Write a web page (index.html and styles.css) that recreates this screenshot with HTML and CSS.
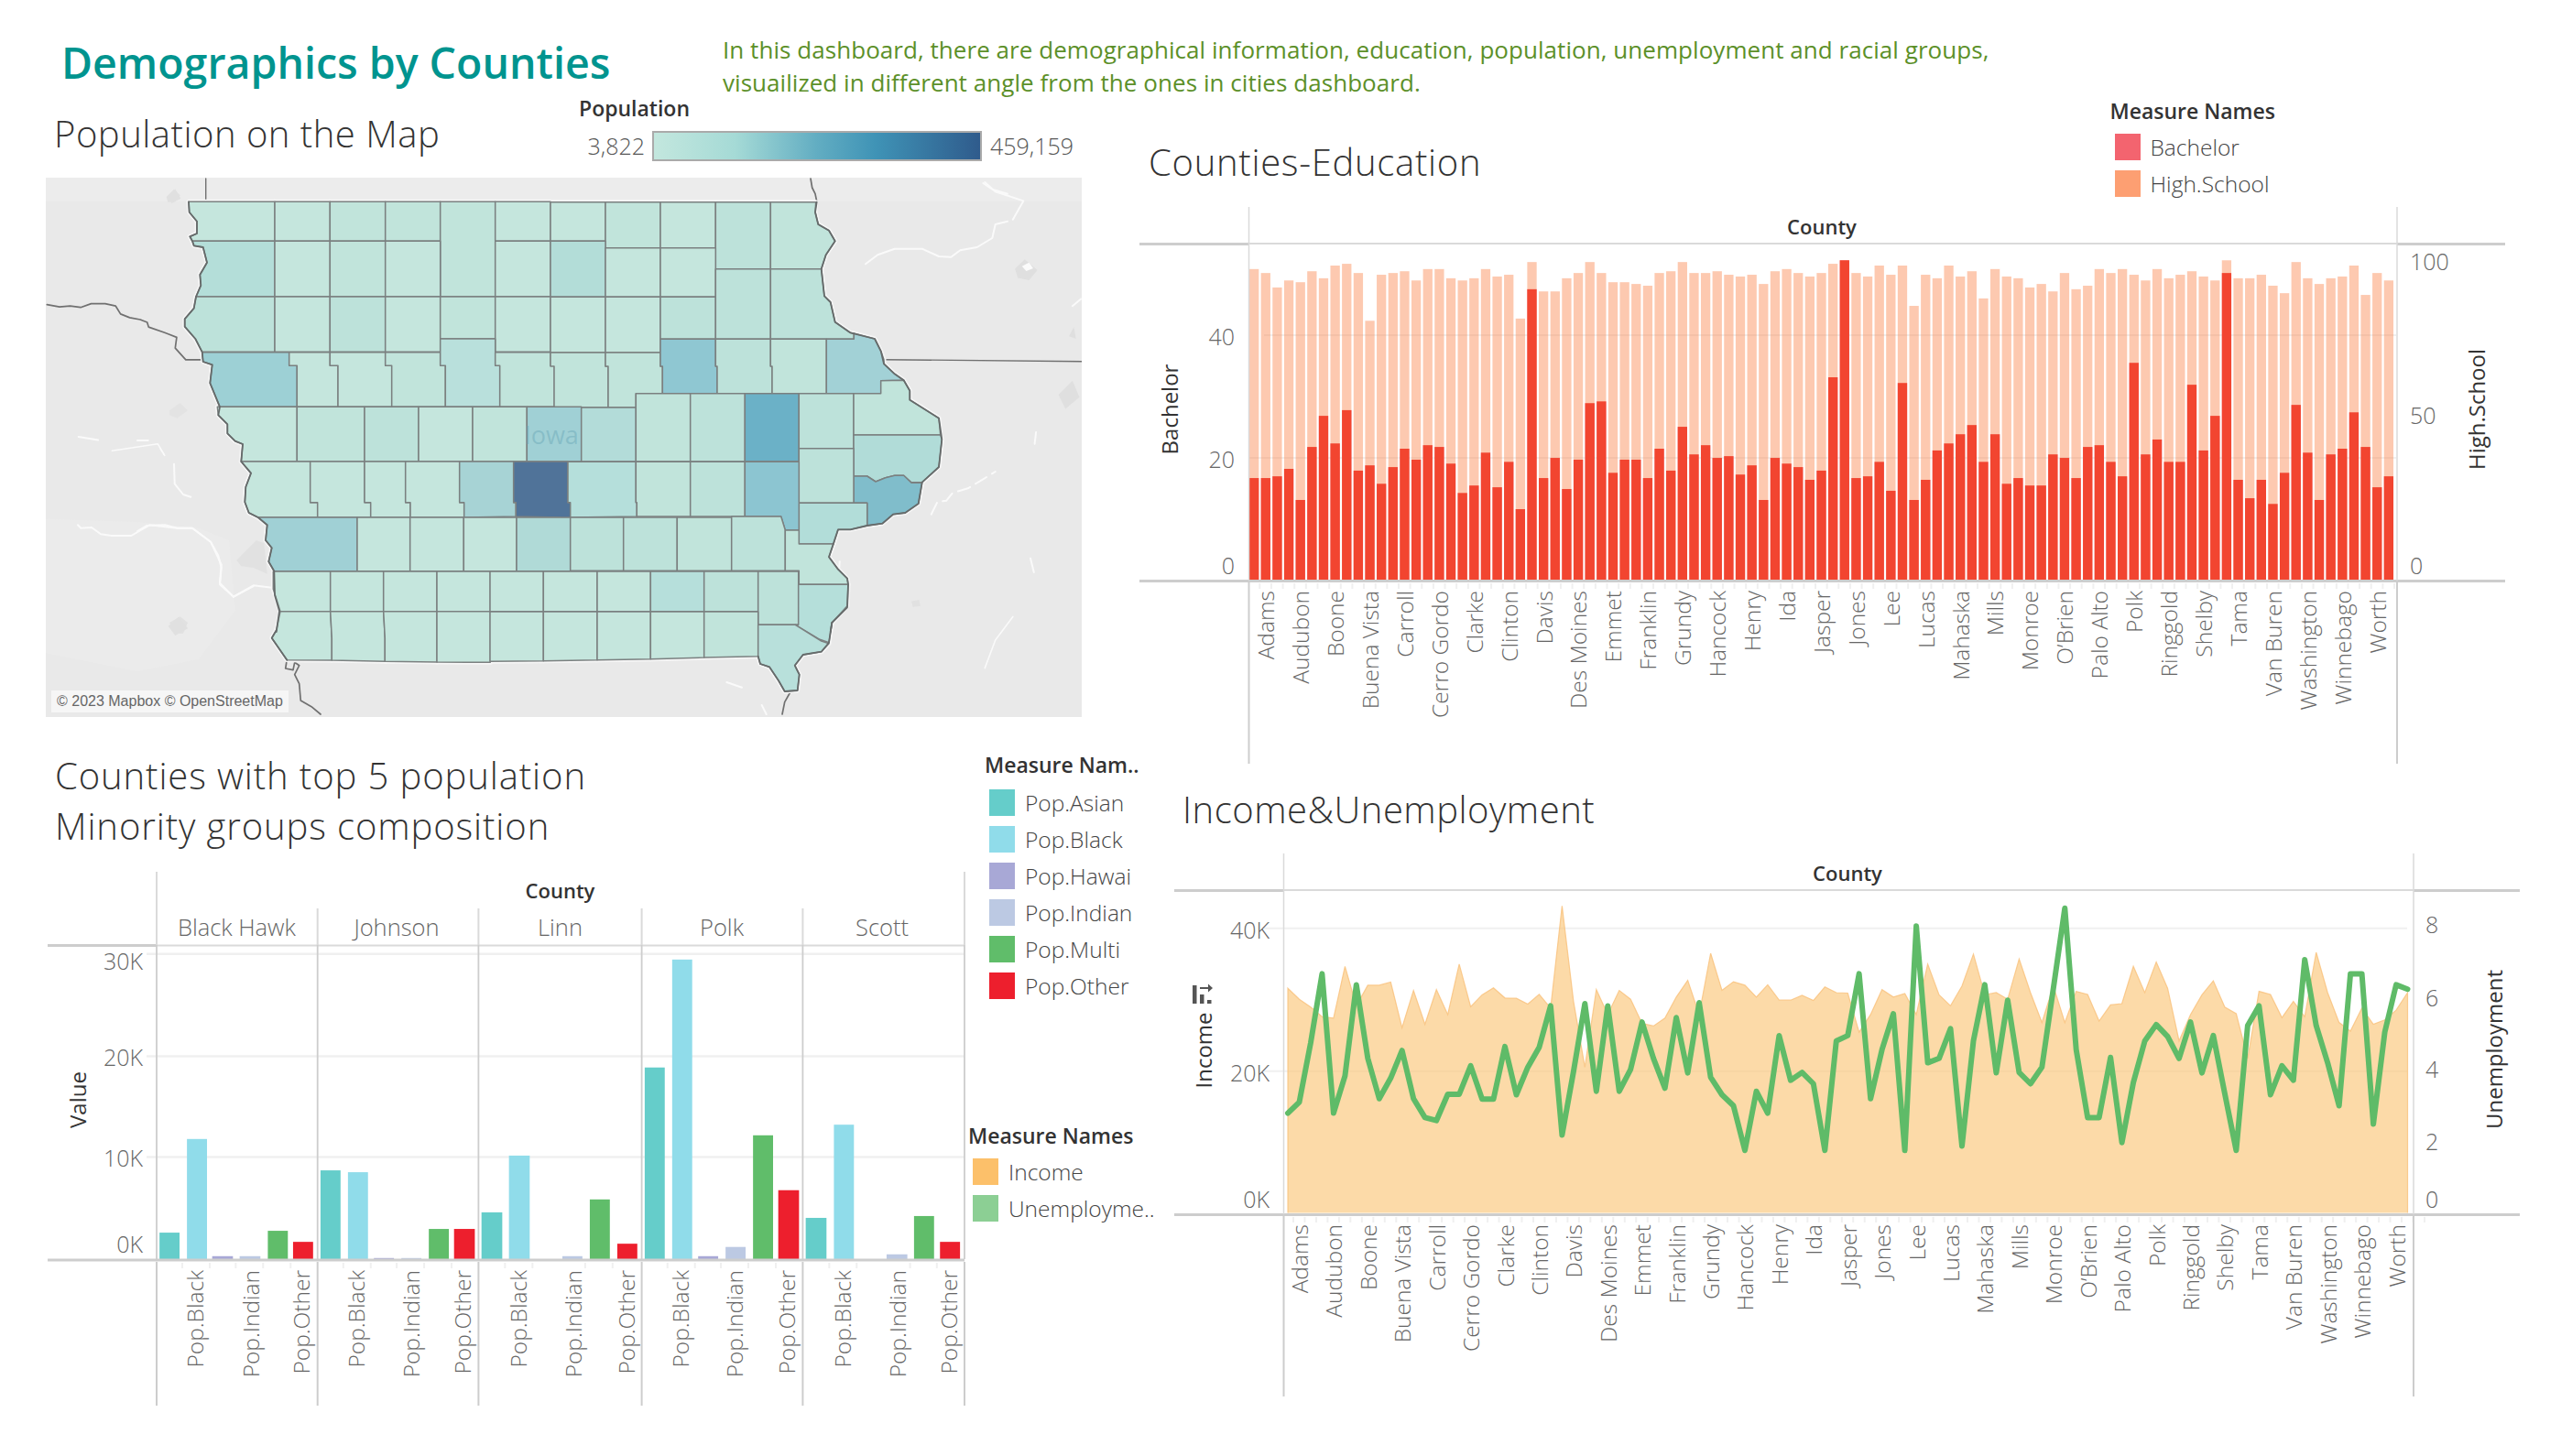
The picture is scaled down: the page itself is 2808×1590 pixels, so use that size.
FILE: index.html
```html
<!DOCTYPE html>
<html lang="en">
<head>
<meta charset="utf-8">
<title>Demographics by Counties</title>
<link rel="stylesheet" href="styles.css">
</head>
<body>
<main class="dash">
  <header class="top">
    <h1 class="main-title">Demographics by Counties</h1>
    <p class="intro">In this dashboard, there are demographical information, education, population, unemployment and racial groups,<br>visuailized in different angle from the ones in cities dashboard.</p>
  </header>
  <div class="cols">
    <section class="col-left">
      <div class="map-head">
        <h2 class="sheet-title">Population on the Map</h2>
        <div class="pop-legend">
          <div class="legend-title">Population</div>
          <div class="pop-row">
            <span class="pop-min">3,822</span>
            <span class="pop-ramp"></span>
            <span class="pop-max">459,159</span>
          </div>
        </div>
      </div>
      <div class="map">
        <svg id="map" class="map-svg" viewBox="50 194 1131 589" width="1131" height="589"></svg>
        <div class="attribution">© 2023 Mapbox © OpenStreetMap</div>
      </div>
      <div class="minority">
        <div class="minority-main">
          <h2 class="sheet-title two-line">Counties with top 5 population<br>Minority groups composition</h2>
          <svg id="minority" class="chart minority-chart" viewBox="40 940 1030 600" width="1030" height="600"></svg>
        </div>
        <div class="minority-legends">
          <div class="legend legend-races">
            <div class="legend-title">Measure Nam..</div>
            <div class="legend-item"><i class="swatch c-asian"></i>Pop.Asian</div>
            <div class="legend-item"><i class="swatch c-black"></i>Pop.Black</div>
            <div class="legend-item"><i class="swatch c-hawai"></i>Pop.Hawai</div>
            <div class="legend-item"><i class="swatch c-indian"></i>Pop.Indian</div>
            <div class="legend-item"><i class="swatch c-multi"></i>Pop.Multi</div>
            <div class="legend-item"><i class="swatch c-other"></i>Pop.Other</div>
          </div>
          <div class="legend legend-income">
            <div class="legend-title">Measure Names</div>
            <div class="legend-item"><i class="swatch c-income"></i>Income</div>
            <div class="legend-item"><i class="swatch c-unemp"></i>Unemployme..</div>
          </div>
        </div>
      </div>
    </section>
    <section class="col-right">
      <div class="edu-head">
        <h2 class="sheet-title edu-title">Counties-Education</h2>
        <div class="legend legend-edu">
          <div class="legend-title">Measure Names</div>
          <div class="legend-item"><i class="swatch c-bachelor"></i>Bachelor</div>
          <div class="legend-item"><i class="swatch c-high"></i>High.School</div>
        </div>
      </div>
      <svg id="education" class="chart" viewBox="1240 220 1520 620" width="1520" height="620"></svg>
      <div class="inc-head">
        <h2 class="sheet-title">Income&amp;Unemployment</h2>
      </div>
      <svg id="income" class="chart income-chart" viewBox="1270 925 1490 620" width="1490" height="620"></svg>
    </section>
  </div>
</main>
<script src="charts.js"></script>
</body>
</html>
```

FILE: styles.css
```css
* { box-sizing: border-box; }
html, body { margin: 0; padding: 0; background: #fff; }
body { font-family: "Open Sans", "Noto Sans", sans-serif; color: #333; }
.dash { width: 2808px; height: 1590px; overflow: hidden; }

.top { height: 104px; display: flex; padding-left: 67px; }
.main-title { margin: 39px 0 0; font-size: 46.5px; line-height: 58px; font-weight: 600; color: #00948f; white-space: nowrap; width: 722px; }
.intro { margin: 36px 0 0; font-size: 26px; line-height: 36px; letter-spacing: .05px; color: #5c9029; white-space: nowrap; }

.cols { display: flex; }
.col-left { width: 1240px; flex: none; }
.col-right { width: 1568px; flex: none; }

.sheet-title { margin: 0; font-size: 40px; line-height: 54px; font-weight: 300; letter-spacing: .5px; color: #333; white-space: nowrap; }

.map-head { height: 90px; display: flex; padding-left: 59px; }
.map-head .sheet-title { margin-top: 15px; width: 573px; }
.pop-legend { width: 541px; }
.legend-title { font-size: 23px; line-height: 28px; font-weight: 600; color: #333; white-space: nowrap; }
.pop-row { display: flex; align-items: center; margin-top: 11px; font-size: 25px; color: #555; line-height: 33px; }
.pop-min { width: 72px; text-align: right; font-weight: 300; }
.pop-max { margin-left: 9px; font-weight: 300; }
.pop-ramp { width: 360px; height: 33px; margin-left: 8px; border: 2px solid #aaa; background: linear-gradient(to right, #c3e7de 0%, #a5dad6 25%, #62adc2 50%, #3f93b6 68%, #2f5b8c 100%); }

.map { margin-left: 50px; width: 1131px; height: 589px; position: relative; background: #e9e9e9; }
.map-svg { display: block; }
.attribution { position: absolute; left: 6px; bottom: 5px; height: 24px; padding: 0 6px; background: rgba(255,255,255,.6); font: 16px/24px "Liberation Sans", Arial, sans-serif; color: #666; white-space: nowrap; }

.minority { display: flex; }
.minority-main { width: 1050px; flex: none; }
.two-line { margin: 36px 0 13px 60px; line-height: 55px; letter-spacing: .9px; }
.chart { display: block; overflow: visible; }
.minority-chart { margin-left: 40px; }
.income-chart { margin-left: 30px; }
.minority-legends { padding-top: 38px; white-space: nowrap; }

.legend-item { display: flex; align-items: center; font-size: 24.5px; color: #444; font-weight: 300; white-space: nowrap; }
.swatch { display: block; width: 28px; height: 29px; flex: none; }
.legend-races { margin-left: 25px; }
.legend-races .legend-item { height: 40px; margin-left: 5px; }
.legend-races .swatch { margin-right: 11px; }
.legend-races .legend-item:nth-child(2) { margin-top: 7px; }
.legend-income { margin-top: 130px; margin-left: 7px; }
.legend-income .legend-item { height: 40px; margin-left: 5px; }
.legend-income .swatch { margin-right: 11px; }
.legend-income .legend-item:nth-child(2) { margin-top: 5px; }

.c-asian { background: #65cdca; }
.c-black { background: #90dcea; }
.c-hawai { background: #a8a8d6; }
.c-indian { background: #bcc9e3; }
.c-multi { background: #60bd6a; }
.c-other { background: #ed1f2d; }
.c-income { background: #fcc06a; }
.c-unemp { background: #8ccf94; }
.c-bachelor { background: #f3646f; }
.c-high { background: #fd9f72; }

.edu-head { height: 116px; display: flex; padding-left: 14px; }
.edu-title { margin-top: 46px; width: 1049.5px; letter-spacing: .7px; }
.legend-edu { padding-top: 3px; }
.legend-edu .legend-item { height: 40px; margin-left: 5px; }
.legend-edu .swatch { margin-right: 11px; }
.legend-edu .legend-item:nth-child(2) { margin-top: 5px; }

.inc-head { height: 85px; padding: 17px 0 0 51px; }

/* chart text */
.tick { font: 300 25px "Open Sans", sans-serif; fill: #666; }
.cat { font: 300 24.5px "Open Sans", sans-serif; fill: #666; }
.panel { font: 300 25.5px "Open Sans", sans-serif; fill: #666; }
.head { font: 600 22px "Open Sans", sans-serif; fill: #333; }
.axis { font: 500 24px "Open Sans", sans-serif; fill: #333; }
.map-label { font: 400 27px "Open Sans", sans-serif; fill: #5f9fb0; fill-opacity: .38; }
```

FILE: charts.js
```js
const NS = 'http://www.w3.org/2000/svg';
function el(parent, name, attrs, txt) {
  const e = document.createElementNS(NS, name);
  for (const k in attrs) e.setAttribute(k, attrs[k]);
  if (txt !== undefined) e.textContent = txt;
  parent.appendChild(e);
  return e;
}
function line(s, x1, y1, x2, y2, color, w) {
  el(s, 'line', { x1, y1, x2, y2, stroke: color, 'stroke-width': w });
}
function label(s, x, y, str, cls, anchor) {
  el(s, 'text', { x, y, class: cls, 'text-anchor': anchor || 'middle', 'dominant-baseline': 'central' }, str);
}
function vlabel(s, x, y, str, cls, anchor) {
  el(s, 'text', { x, y, class: cls, 'text-anchor': anchor || 'middle', 'dominant-baseline': 'central', transform: `rotate(-90 ${x} ${y})` }, str);
}
const COUNTIES = ['Adams','Audubon','Boone','Buena Vista','Carroll','Cerro Gordo','Clarke','Clinton','Davis','Des Moines','Emmet','Franklin','Grundy','Hancock','Henry','Ida','Jasper','Jones','Lee','Lucas','Mahaska','Mills','Monroe',"O\u2019Brien",'Palo Alto','Polk','Ringgold','Shelby','Tama','Van Buren','Washington','Winnebago','Worth'];
const GRID = '#f0f0f0', RULE = '#cdcdcd', THIN = '#dadada';

/* ---------- Education ---------- */
(function () {
  const s = document.getElementById('education');
  const high = [426,435,468,452,456,431,447,418,414,435,544,439,435,431,452,426,426,447,452,447,426,443,439,539,410,477,477,447,435,410,435,456,456,460,464,435,431,410,435,435,431,439,443,439,460,431,426,435,443,435,414,406,435,443,418,439,418,510,439,447,418,443,431,493,426,443,447,468,460,477,435,472,464,426,435,426,439,452,426,447,439,431,443,452,406,447,447,439,464,481,410,447,460,447,443,418,485,435,452];
  const bach = [903,903,899,882,953,832,761,824,748,886,874,916,878,836,861,828,832,870,937,920,845,924,866,974,472,903,857,928,861,732,728,891,861,861,903,836,886,786,849,828,857,853,895,874,953,857,870,878,907,886,673,406,903,899,866,932,686,953,907,840,824,803,782,866,803,916,903,920,920,849,857,903,832,828,866,899,640,849,815,866,866,690,840,761,435,907,949,907,962,891,736,845,953,849,836,753,832,924,899];
  const Y = z => 90 + z / 2.09;
  const base = 633, left = 1364, pitch = 12.64, bw = 10.3;
  line(s, 1380, 366, 2616, 366, GRID, 2);
  line(s, 1364, 500, 2616, 500, GRID, 2);
  bach.forEach((z, i) => {
    const y = Y(z), x = left + i * pitch;
    el(s, 'rect', { x, y, width: bw, height: base - y, fill: '#ed1c24' });
  });
  high.forEach((z, i) => {
    const y = Y(z), x = left + i * pitch;
    el(s, 'rect', { x, y, width: bw, height: base - y, fill: '#fa7e43', 'fill-opacity': .42 });
  });
  for (let i = 0; i < 99; i++) {
    const x = left + i * pitch + bw + 1;
    line(s, x, 637, x, 643, '#f0f0f0', 2);
  }
  COUNTIES.forEach((c, i) => vlabel(s, left + 5 + pitch + i * 3 * pitch, 645, c, 'cat', 'end'));
  line(s, 1244, 266.5, 1363, 266.5, RULE, 3);
  line(s, 1363, 266, 2617, 266, THIN, 2);
  line(s, 2617, 266.5, 2735, 266.5, RULE, 3);
  line(s, 1244, 634.5, 2735, 634.5, RULE, 3);
  line(s, 1363.5, 226, 1363.5, 266, THIN, 1.5);
  line(s, 2617, 226, 2617, 266, THIN, 1.5);
  line(s, 1363.5, 266, 1363.5, 634, THIN, 1.5);
  line(s, 2617, 266, 2617, 634, THIN, 1.5);
  line(s, 1363.5, 636, 1363.5, 834, RULE, 2);
  line(s, 2617, 636, 2617, 834, RULE, 2);
  label(s, 1989, 246.5, 'County', 'head');
  label(s, 1348, 367, '40', 'tick', 'end');
  label(s, 1348, 501, '20', 'tick', 'end');
  label(s, 1348, 617, '0', 'tick', 'end');
  label(s, 2631, 285, '100', 'tick', 'start');
  label(s, 2631, 453, '50', 'tick', 'start');
  label(s, 2631, 617, '0', 'tick', 'start');
  vlabel(s, 1276, 447, 'Bachelor', 'axis');
  vlabel(s, 2703, 447, 'High.School', 'axis');
})();

/* ---------- Income ---------- */
(function () {
  const s = document.getElementById('income');
  const area = [500,525,543,565,568,450,540,493,493,486,590,505,582,503,560,445,542,515,499,522,523,536,514,545,312,530,680,503,560,505,525,580,586,568,520,482,560,420,505,485,493,520,492,527,527,516,528,497,510,511,600,560,503,520,512,560,445,515,540,495,422,515,510,525,433,510,578,495,578,507,514,575,538,535,450,510,440,500,620,560,515,483,543,558,660,507,514,567,530,565,418,510,578,598,545,582,572,550,510];
  const lineY = [785,760,625,467,785,700,492,660,752,705,642,752,795,802,742,742,677,753,753,633,743,680,635,540,835,690,535,735,540,735,685,577,660,728,567,693,533,703,743,768,870,735,785,608,710,692,718,870,620,608,467,752,640,558,870,358,670,660,592,860,620,492,693,527,692,718,680,500,317,640,795,795,658,852,715,620,583,610,660,577,693,608,740,870,585,540,743,677,710,435,585,670,768,467,467,810,600,492,502];
  const Y = z => 840 + z / 2.09;
  const left = 1406, pitch = (2628.5 - 1406) / 98, base = 1324.5;
  line(s, 1380, 1013.7, 2628, 1013.7, GRID, 2);
  line(s, 1380, 1169.7, 2628, 1169.7, GRID, 2);
  let d = `M${left} ${base}`;
  area.forEach((z, i) => { d += `L${(left + i * pitch).toFixed(1)} ${Y(z).toFixed(1)}`; });
  d += `L${left + 98 * pitch} ${base}Z`;
  el(s, 'path', { d, fill: '#fbc679', 'fill-opacity': .65 });
  d = '';
  area.forEach((z, i) => { d += `${i ? 'L' : 'M'}${(left + i * pitch).toFixed(1)} ${Y(z).toFixed(1)}`; });
  el(s, 'path', { d: `M${left} ${base}L` + d.slice(1) + `L${left + 98 * pitch} ${base}`, fill: 'none', stroke: '#f9c17a', 'stroke-width': 1.2, 'stroke-opacity': .8 });
  d = '';
  lineY.forEach((z, i) => { d += `${i ? 'L' : 'M'}${(left + i * pitch).toFixed(1)} ${Y(z).toFixed(1)}`; });
  el(s, 'path', { d, fill: 'none', stroke: '#5fbb68', 'stroke-width': 6, 'stroke-linejoin': 'round', 'stroke-linecap': 'round' });
  for (let i = 0; i < 100; i++) {
    const x = 1412 + i * pitch;
    line(s, x, 1329, x, 1335, '#f0f0f0', 2);
  }
  COUNTIES.forEach((c, i) => vlabel(s, left + pitch + i * 3 * pitch, 1337, c, 'cat', 'end'));
  line(s, 1282, 972.5, 1401, 972.5, RULE, 3);
  line(s, 1401, 972, 2635, 972, THIN, 2);
  line(s, 2635, 972.5, 2751, 972.5, RULE, 3);
  line(s, 1282, 1326.5, 2751, 1326.5, RULE, 3);
  line(s, 1401.5, 932, 1401.5, 1326, THIN, 1.5);
  line(s, 2635, 932, 2635, 1326, THIN, 1.5);
  line(s, 1401.5, 1328, 1401.5, 1525, RULE, 2);
  line(s, 2635, 1328, 2635, 1525, RULE, 2);
  label(s, 2017, 952.5, 'County', 'head');
  label(s, 1386, 1014.5, '40K', 'tick', 'end');
  label(s, 1386, 1170.5, '20K', 'tick', 'end');
  label(s, 1386, 1308.5, '0K', 'tick', 'end');
  [['8', 1008.5], ['6', 1088.5], ['4', 1166.5], ['2', 1245.5], ['0', 1308.5]].forEach(t => label(s, 2648, t[1], t[0], 'tick', 'start'));
  vlabel(s, 1313, 1147, 'Income', 'axis');
  vlabel(s, 2722, 1146, 'Unemployment', 'axis');
  const icon = el(s, 'g', { fill: '#555' });
  el(icon, 'rect', { x: 1302, y: 1076, width: 4.5, height: 20 });
  el(icon, 'rect', { x: 1310, y: 1086, width: 4.5, height: 10 });
  el(icon, 'rect', { x: 1318, y: 1092, width: 4.5, height: 4 });
  el(icon, 'rect', { x: 1310, y: 1078, width: 10, height: 2 });
  el(icon, 'path', { d: 'M1319 1074.5L1324 1079L1319 1083.5Z' });
})();

/* ---------- Minority groups ---------- */
(function () {
  const s = document.getElementById('minority');
  const X = z => z / 1.2346, Y = z => 800 + z / 1.985;
  const base = 1373;
  [1039.8, 1151.6, 1261.5].forEach(y => line(s, 160, y, 1053, y, GRID, 2.5));
  const cls = ['#65cdca', '#90dcea', '#a8a8d6', '#bcc9e3', '#60bd6a', '#ed1f2d'];
  const bars = [
    [[215,242,1080],[252,279,877],[286,314,1131],[323,351,1131],[361,388,1076],[395,422,1100]],
    [[432,459,945],[469,496,949],[504,531,1135],[541,568,1135],[578,605,1072],[612,640,1072]],
    [[649,677,1036],[686,714,913],null,[758,785,1131],[795,822,1008],[832,859,1104]],
    [[869,896,722],[906,933,488],[941,968,1131],[978,1005,1111],[1015,1042,869],[1049,1077,988]],
    [[1086,1114,1048],[1124,1151,846],null,[1195,1223,1127],[1232,1259,1044],[1267,1294,1100]]
  ];
  bars.forEach(g => g.forEach((b, i) => {
    if (!b) return;
    const y = Y(b[2]);
    el(s, 'rect', { x: X(b[0]), y, width: X(b[1]) - X(b[0]), height: base - y, fill: cls[i] });
    const tx = X(b[1]) + 3;
    if (i < 5) line(s, tx, 1377, tx, 1383, '#f0f0f0', 2);
  }));
  ['Pop.Black','Pop.Indian','Pop.Other'].forEach((n, j) => {
    [[262,338,406],[480,554,623],[698,772,844],[917,990,1060],[1135,1209,1278]].forEach(c => vlabel(s, X(c[j]), 1385, n, 'cat', 'end'));
  });
  line(s, 52, 1030.5, 171, 1030.5, RULE, 3);
  line(s, 171, 1030.5, 1053, 1030.5, THIN, 2);
  line(s, 52, 1374, 1053, 1374, RULE, 3);
  [171, 346.7, 522.4, 700.6, 876.4, 1053].forEach((x, i) => {
    line(s, x, (i === 0 || i === 5) ? 950 : 990, x, 1030, THIN, 2);
    line(s, x, 1030, x, 1373, RULE, 1.8);
    line(s, x, 1376, x, 1533, RULE, 2);
  });
  label(s, 611.5, 969.5, 'County', 'head');
  [['Black Hawk', 258.4], ['Johnson', 433], ['Linn', 611.5], ['Polk', 788], ['Scott', 963]].forEach(p => label(s, p[1], 1009.5, p[0], 'panel'));
  label(s, 156, 1047, '30K', 'tick', 'end');
  label(s, 156, 1152, '20K', 'tick', 'end');
  label(s, 156, 1261.5, '10K', 'tick', 'end');
  label(s, 156, 1355.5, '0K', 'tick', 'end');
  vlabel(s, 84, 1199, 'Value', 'axis');
})();

/* ---------- Map ---------- */
(function () {
  const s = document.getElementById('map');
  const conv = {
    a: (X, Y) => [150 + X / 3, 190 + Y / 3],
    b: (X, Y) => [600 + X / 3, 190 + Y / 3],
    c: (X, Y) => [50 + X / 3, 480 + Y / 3],
    d: (X, Y) => [500 + X / 3, 480 + Y / 3],
    o: (X, Y) => [X / 1.3067, Y / 1.96]
  };
  function pts(f, str) {
    return str.trim().split(/\s+/).map(p => {
      const v = p.split(',').map(Number);
      return conv[f](v[0], v[1]).map(n => n.toFixed(1)).join(',');
    }).join(' ');
  }
  const pl = (f, str, stroke, w, extra) => el(s, 'polyline', Object.assign({ points: pts(f, str), fill: 'none', stroke, 'stroke-width': w, 'stroke-linejoin': 'round', 'stroke-linecap': 'round' }, extra || {}));

  /* terrain */
  const blob = (f, str, c) => el(s, 'polygon', { points: pts(f, str), fill: c || '#e1e1e1' });
  el(s, 'rect', { x: 50, y: 194, width: 1131, height: 26, fill: '#ececec' });
  blob('c', '0,260 300,270 500,290 600,330 620,560 500,720 300,760 0,700', '#ebebeb');
  blob('c', '625,395 650,370 690,330 715,340 725,440 680,420 640,415');
  blob('c', '405,600 440,580 465,600 450,635 420,635');
  blob('a', '95,75 120,50 140,70 120,92 100,92', '#e0e0e0');
  blob('a', '105,775 140,750 165,775 130,800 105,790', '#e3e3e3');
  blob('b', '1185,1400 1210,1395 1215,1415 1190,1418', '#e1e1e1');
  blob('o', '1448,575 1462,555 1480,578 1468,600 1452,595', '#dfdfdf');
  blob('o', '1458,570 1468,562 1474,574 1464,580', '#fbfbfb');
  blob('o', '1510,845 1530,815 1540,850 1520,875', '#dfdfdf');
  blob('o', '1525,720 1532,700 1535,725', '#dfdfdf');
  blob('o', '240,420 250,405 258,425 245,435', '#e0e0e0');
  blob('o', '240,1340 255,1320 268,1345 250,1360', '#e0e0e0');
  /* white rivers */
  const W = '#fafafa';
  pl('a', '0,1170 30,1152 90,1150 130,1160 180,1160 240,1205 265,1250 275,1290 270,1345 315,1385 380,1348 440,1355', W, 2);
  pl('a', '120,950 122,1015 150,1050 175,1058', W, 2);
  pl('a', '0,873 35,873', W, 2);
  pl('a', '75,900 88,920', W, 1.5);
  pl('o', '112,935 140,942', W, 2);
  pl('o', '160,965 225,950 235,975', W, 1.6);
  pl('c', '105,280 115,290 150,288 180,310 215,315 280,315 340,280 430,290 480,290 540,335 575,410 570,470 615,515 680,480', W, 2);
  pl('b', '1035,295 1075,265 1130,245 1220,245 1275,270 1315,272 1345,250 1400,240 1450,210 1460,165 1500,155', W, 2);
  pl('b', '1420,30 1450,50 1500,65', W, 2);
  pl('o', '1405,390 1420,410 1460,430 1445,470', W, 2);
  pl('o', '1530,655 1542,640', W, 2);
  pl('b', '1250,1115 1270,1075 1300,1070 1320,1045 1370,1030 1420,1000 1460,975', W, 2, { 'stroke-dasharray': '14 7' });
  pl('o', '1478,925 1476,950', W, 2);
  pl('o', '1445,1320 1420,1370 1405,1430', W, 1.6);
  pl('o', '1470,1195 1475,1225', W, 2);
  pl('d', '880,795 930,812', W, 2);
  pl('d', '995,870 1010,900', W, 2);
  pl('d', '1250,400 1248,430', W, 2);
  /* neighbouring state lines */
  const B = '#707070';
  pl('a', '224,15 224,90', B, 1.4);
  pl('o', '67,652 85,657 100,655 115,658 130,650 150,650 165,655 172,672 185,680 200,684 210,690 212,700 235,712 240,715 252,722 250,745 265,770 288,770', B, 1.7);
  pl('b', '855,15 860,45 870,65 875,90', B, 1.7);
  pl('b', '1095,608 1743,614', B, 1.4);
  pl('c', '790,720 785,750 810,755 815,730 830,740 815,770 830,800 835,855 870,875 900,900', B, 1.7);
  pl('d', '1088,828 1070,860 1062,900', B, 1.7);

  const A = '#c5e6dd', A2 = '#c1e4db', A3 = '#bde2da', D1 = '#b4ded9';
  const C = [
    ['a','168,91 450,91 450,220 180,220 172,205 195,195 195,155 170,125',A],
    ['a','450,91 631,91 631,220 450,220',A],['a','631,91 812,91 812,220 631,220',A2],['a','812,91 992,91 992,220 812,220',A2],
    ['a','992,91 1172,91 1172,402 992,402',A2],['a','1172,91 1353,91 1353,220 1172,220',A],
    ['b','3,92 183,92 183,220 3,220',A],['b','183,92 363,92 363,242 183,242',A2],['b','363,92 544,92 544,242 363,242',A],
    ['b','544,92 724,92 724,311 544,311',A3],['b','724,92 872,92 870,125 880,165 915,185 935,220 905,265 890,311 724,311',A2],
    ['a','180,220 450,220 450,402 192,402 208,365 205,330 228,290 215,240 185,235',D1],
    ['a','450,220 631,220 631,402 450,402',A],['a','631,220 812,220 812,402 631,402',A2],['a','812,220 992,220 992,402 812,402',A],
    ['a','1172,220 1353,220 1353,402 1172,402',A],['b','3,220 183,220 183,403 3,403','#b3ddd8'],
    ['b','183,242 363,242 363,403 183,403',A],['b','363,242 544,242 544,403 363,403',A],
    ['a','192,402 450,402 450,583 212,583 190,540 155,500 155,475 185,440',A3],
    ['a','450,402 631,402 631,583 450,583',A],['a','631,402 812,402 812,583 631,583',A3],['a','812,402 992,402 992,583 812,583',A],
    ['a','992,402 1172,402 1172,540 992,540',A2],['a','1172,402 1353,402 1353,583 1172,583',A],
    ['b','3,403 183,403 183,585 3,585',A],['b','183,403 363,403 363,585 183,585',A],['b','363,403 544,403 544,541 363,541',A3],
    ['b','544,311 724,311 724,541 544,541',A3],['b','724,311 890,311 900,400 920,420 935,485 985,520 997,522 997,541 724,541',A3],
    ['a','212,584 497,584 497,628 523,628 523,763 270,763 238,685 245,625 215,615','#9dd0d5'],
    ['a','497,584 631,584 631,628 657,628 657,763 523,763 523,628 497,628',A],
    ['a','631,584 812,584 812,628 833,628 833,763 657,763 657,628 631,628',A],
    ['a','812,584 992,584 992,628 1009,628 1009,763 833,763 833,628 812,628',A2],
    ['a','992,540 1172,540 1172,628 1187,628 1187,763 1009,763 1009,628 992,628','#b9e0dc'],
    ['a','1172,584 1353,584 1353,628 1366,628 1366,763 1187,763 1187,628 1172,628',A2],
    ['b','3,585 183,585 183,630 192,630 192,765 15,765 15,630 3,630',A2],
    ['b','183,585 363,585 363,630 370,630 370,719 283,719 283,765 192,765 192,630 183,630',A2],
    ['b','363,541 544,541 544,630 549,630 549,719 370,719 370,630 363,630','#8fc7d2'],
    ['b','544,541 724,541 724,630 729,630 729,719 549,719 549,630 544,630',A3],
    ['b','724,541 907,541 907,719 729,719 729,630 724,630',A2],
    ['b','907,541 997,541 997,522 1065,540 1085,580 1095,608 1095,622 1130,655 1160,676 1085,677 1085,719 907,719','#a2d1d6'],
    ['a','262,763 523,763 523,942 340,942 345,885 320,875 295,850 295,820 265,790',A],
    ['a','523,763 744,763 744,942 523,942',A2],['a','744,763 921,763 921,942 744,942',A3],['a','921,763 1098,763 1098,942 921,942',A],
    ['a','1098,763 1276,763 1276,942 1098,942',A2],['a','1276,763 1454,763 1454,942 1276,942','#a0d0d5'],
    ['b','104,765 283,765 283,942 104,942','#b3dcd9'],
    ['b','283,719 461,719 461,942 283,942',A2],['b','461,719 640,719 640,942 461,942',A3],['b','640,719 817,719 817,942 640,942','#6bb1c7'],
    ['b','817,719 996,719 996,899 817,899',A3],['b','996,719 1085,719 1085,677 1160,676 1180,710 1180,740 1275,800 1280,855 996,855',A2],
    ['b','996,855 1280,855 1285,870 1275,960 1220,1010 1185,1010 1160,988 1130,988 1100,995 1068,1008 1040,990 996,990','#b1dcd8'],
    ['b','996,990 1040,990 1068,1008 1100,995 1130,988 1160,988 1185,1012 1220,1012 1208,1080 1165,1110 1125,1115 1090,1145 1040,1152 1040,1078 996,1078','#80bdcb'],
    ['b','817,899 996,899 996,1078 817,1078',A3],
    ['b','817,1078 1040,1078 1040,1152 985,1165 945,1165 930,1212 817,1212','#b2ddd9'],
    ['a','340,942 566,942 566,1076 590,1076 590,1125 395,1125 365,1110 352,1075 355,1025 372,980',A],
    ['a','566,942 744,942 744,1076 764,1076 764,1125 590,1125 590,1076 566,1076',A],
    ['a','744,942 878,942 878,1076 894,1076 894,1125 764,1125 764,1076 744,1076',A],
    ['a','878,942 1055,942 1055,1076 1070,1076 1070,1125 894,1125 894,1076 878,1076',A],
    ['a','1055,942 1232,942 1232,1076 1240,1076 1240,1122 1070,1125 1070,1076 1055,1076','#a7d3d5'],
    ['a','1232,942 1410,942 1410,1076 1418,1076 1418,1135 1388,1135 1385,1125 1240,1122 1240,1076 1232,1076','#507399'],
    ['b','60,943 283,943 283,1076 286,1076 286,1122 68,1125 68,1076 60,1076','#b5dfdb'],
    ['b','283,943 461,943 461,1122 286,1122 286,1076 283,1076',A2],
    ['b','461,943 640,943 640,1122 461,1122',A3],
    ['b','640,943 817,943 817,1167 772,1167 758,1122 640,1122','#8cc5d1'],
    ['a','395,1125 720,1125 720,1301 448,1301 430,1270 440,1225 420,1200 425,1150','#a0d0d5'],
    ['a','720,1125 893,1125 893,1301 720,1301',A],['a','893,1125 1069,1125 1069,1301 893,1301',A],['a','1069,1125 1242,1125 1242,1301 1069,1301',A],
    ['a','1242,1125 1418,1125 1418,1301 1242,1301','#b0dad7'],
    ['b','68,1125 242,1125 242,1300 68,1300',A3],['b','242,1125 418,1125 418,1300 242,1300',A3],['b','418,1125 596,1125 596,1300 418,1300',A2],
    ['b','596,1122 758,1122 772,1167 772,1300 596,1300','#bde2da'],
    ['b','772,1167 817,1167 817,1212 930,1212 915,1255 945,1295 975,1325 978,1345 817,1345 817,1300 772,1300',A2],
    ['c','745,432 932,432 932,563 768,563 745,490',A],['c','932,432 1106,432 1106,563 932,563',A],
    ['c','1106,432 1281,432 1281,563 1106,563',A],['c','1281,432 1456,432 1456,563 1281,563',A],
    ['d','105,432 280,432 280,563 105,563',A],['d','280,432 456,432 456,563 280,563',A],['d','456,432 631,432 631,563 456,563',A],
    ['d','631,432 806,432 806,563 631,563','#b6dfdb'],['d','806,432 983,432 983,563 806,563',A3],
    ['d','983,432 1115,432 1115,607 983,607',A3],
    ['c','768,563 932,563 937,650 937,723 790,722 740,650 755,625',A],['c','932,563 1106,563 1111,650 1111,727 937,723 937,650',A],
    ['c','1106,563 1281,563 1281,729 1111,727 1111,650',A],['c','1281,563 1456,563 1456,730 1281,729',A],
    ['d','105,564 280,564 280,725 105,727',A],['d','280,564 456,564 456,722 280,725',A],['d','456,564 631,564 631,719 456,722',A],
    ['d','631,564 806,564 806,714 631,719',A],['d','806,564 983,564 983,710 806,714',A2],
    ['d','1115,475 1278,475 1275,545 1225,600 1215,665 1185,655 1105,607 1115,607','#b5dfda'],
    ['d','983,607 1105,607 1190,660 1215,668 1190,695 1130,705 1103,740 1118,770 1112,822 1070,825 1050,790 1020,745 990,735 983,710','#b8e0db']
  ];
  const halo = el(s, 'g', { fill: 'none', stroke: '#f6f6f6', 'stroke-width': 5, 'stroke-linejoin': 'round' });
  C.forEach(c => el(halo, 'polygon', { points: pts(c[0], c[1]) }));
  C.forEach(c => el(s, 'polygon', { points: pts(c[0], c[1]), fill: c[2], stroke: '#7b8080', 'stroke-width': 1.5, 'stroke-linejoin': 'round' }));
  label(s, 602, 474, 'Iowa', 'map-label');
  /* river edge of the state */
  const E = '#666b6b';
  pl('a', '168,91 170,125 195,155 195,195 172,205 180,220 185,235 215,240 228,290 205,330 208,365 192,402 185,440 155,475 155,500 190,540 212,583 215,615 245,625 238,685 270,763 265,790 295,820 295,850 320,875 345,885 340,942 372,980 355,1025 352,1075 365,1110 395,1125 425,1150 420,1200 440,1225 430,1270 448,1301 450,1380 465,1432 455,1500', E, 1.8);
  pl('c', '755,625 740,650 790,722', E, 1.8);
  pl('b', '875,92 870,125 880,165 915,185 935,220 905,265 890,311 900,400 920,420 935,485 985,520 1065,540 1085,580 1095,622 1130,655 1160,676 1180,710 1180,740 1275,800 1285,870 1275,960 1220,1010 1208,1080 1165,1110 1125,1115 1090,1145 1040,1152 985,1165 945,1165 915,1255 945,1295 975,1325 978,1345 975,1420 925,1470 920,1500', E, 1.8);
  pl('d', '1225,600 1215,665 1190,695 1130,705 1103,740 1118,770 1112,822 1070,825 1050,790 1020,745 990,735 983,710', E, 1.8);
})();
```
